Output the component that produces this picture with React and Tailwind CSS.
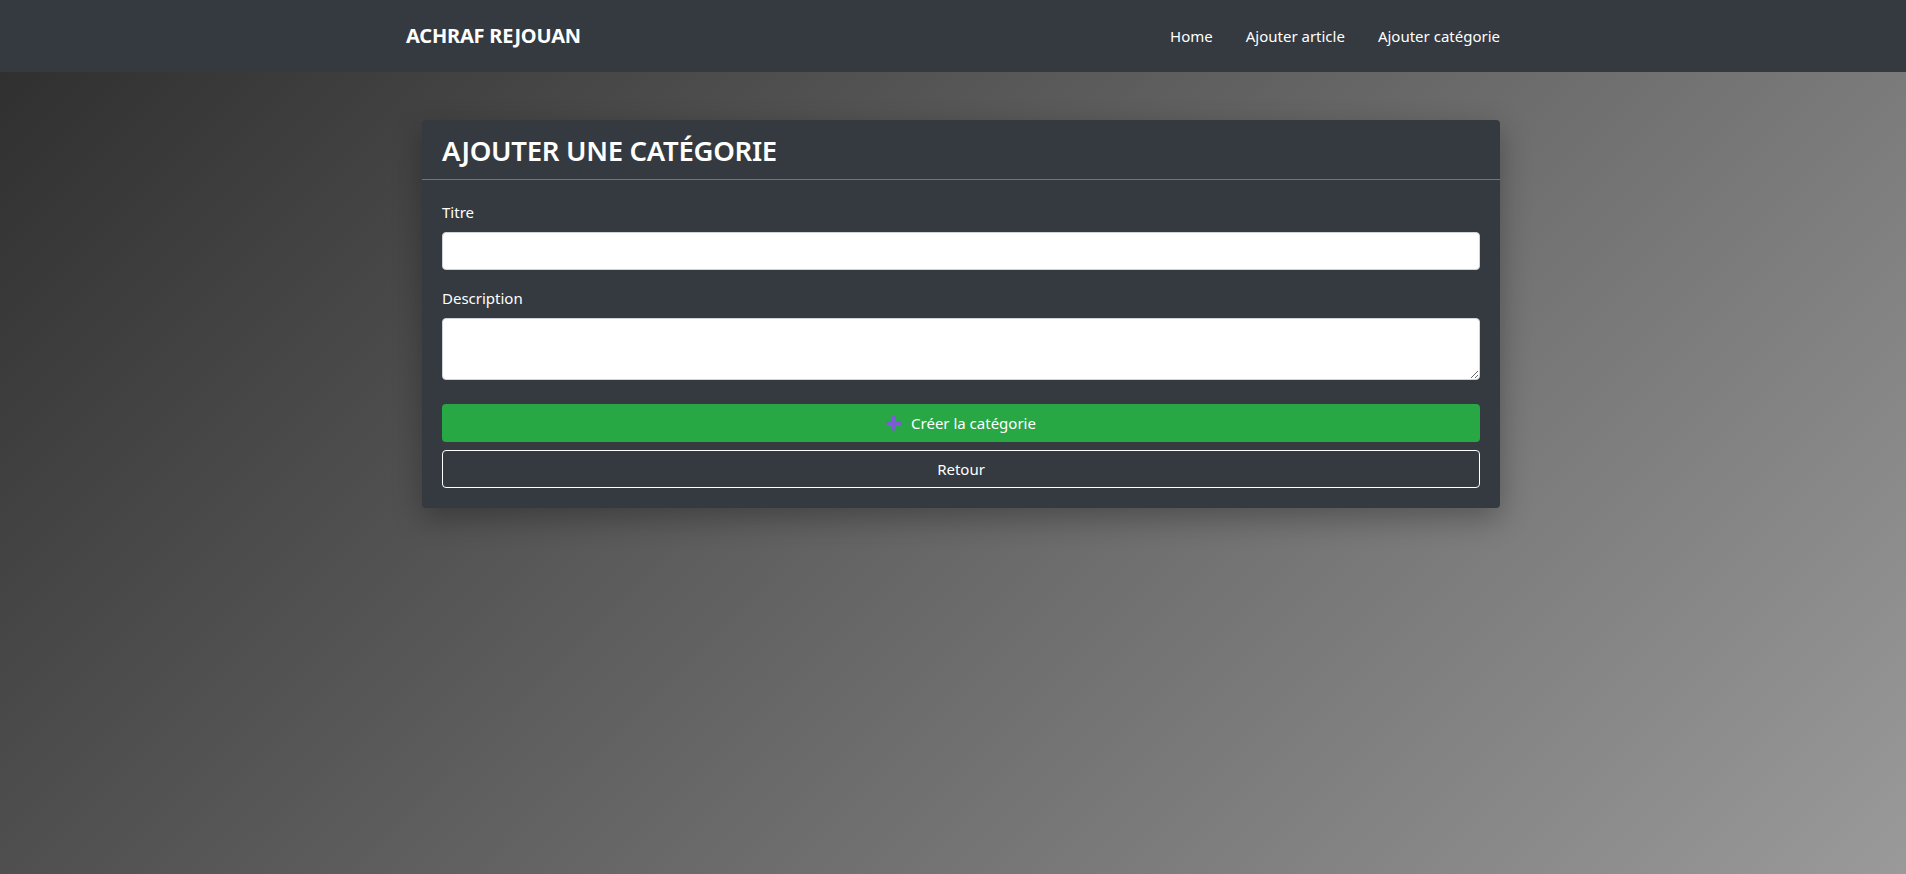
import React from "react";

export default function App() {
  const font = { fontFamily: '"Noto Sans", "Open Sans", sans-serif' };
  return (
    <div
      className="min-h-screen w-full bg-[linear-gradient(135deg,#2d2d2d_0%,#9a9a9a_100%)] text-white"
      style={font}
    >
      <nav className="h-[72px] w-full bg-[#343a40]">
        <div className="mx-auto flex h-full w-[1094px] items-center justify-between">
          <a className="text-[20px] font-bold leading-none tracking-[-0.2px] text-white">ACHRAF REJOUAN</a>
          <ul className="flex items-center gap-[33px] text-[15px] text-white">
            <li>Home</li>
            <li>Ajouter article</li>
            <li>Ajouter catégorie</li>
          </ul>
        </div>
      </nav>

      <main className="mx-auto flex w-[1094px] justify-end pt-[48px]">
        <div className="w-[1078px] rounded-[4px] bg-[#343a40] shadow-[0_10px_30px_rgba(0,0,0,0.3)]">
          <div className="border-b border-[#6c757d] px-5 pb-[11px] pt-[14px]">
            <h3 className="text-[27.5px] font-semibold leading-[1.25] tracking-[-0.3px]">AJOUTER UNE CATÉGORIE</h3>
          </div>
          <div className="px-5 py-5">
            <div className="mb-4">
              <label className="mb-2 block text-[15px] leading-6">Titre</label>
              <input
                type="text"
                className="block h-[38px] w-full rounded-[4px] border border-[#ced4da] bg-white px-3 text-black outline-none"
              />
            </div>
            <div className="mb-6">
              <label className="mb-2 block text-[15px] leading-6">Description</label>
              <textarea
                rows={2}
                className="block h-[62px] w-full rounded-[4px] border border-[#ced4da] bg-white px-3 py-1.5 text-black outline-none"
              />
            </div>
            <button className="flex h-[38px] w-full items-center justify-center gap-[9px] rounded-[4px] bg-[#28a745] text-[15px] text-white">
              <svg width="16" height="16" viewBox="0 0 16 16">
                <rect x="6" y="0.5" width="4" height="15" rx="1" fill="#7c5cd6" />
                <rect x="0.5" y="6" width="15" height="4" rx="1" fill="#7c5cd6" />
              </svg>
              <span>Créer la catégorie</span>
            </button>
            <button className="mt-2 flex h-[38px] w-full items-center justify-center rounded-[4px] border border-white bg-transparent text-[15px] text-white">
              Retour
            </button>
          </div>
        </div>
      </main>
    </div>
  );
}
